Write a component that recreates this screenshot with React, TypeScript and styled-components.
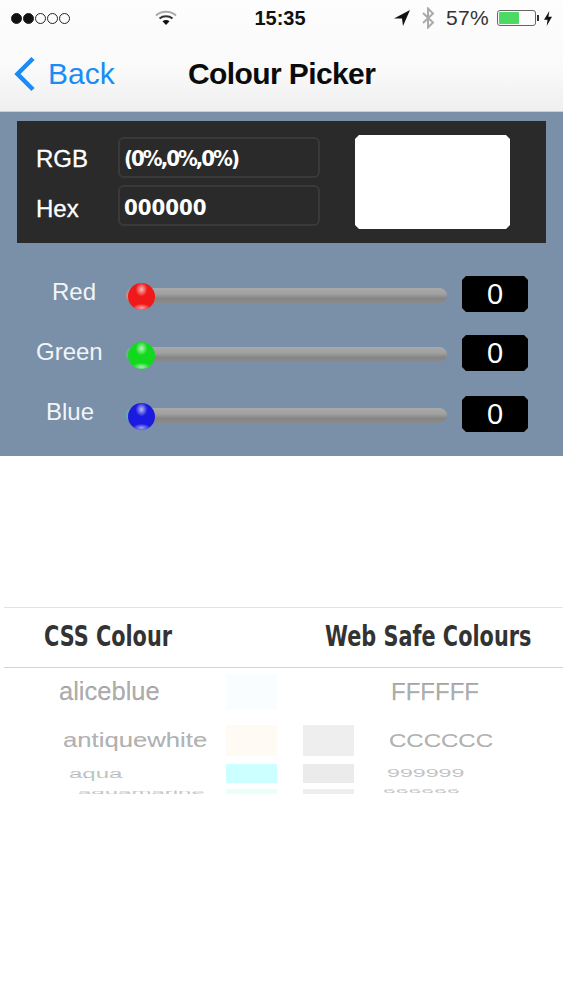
import React from 'react';
import styled, { createGlobalStyle } from 'styled-components';

const GlobalStyle = createGlobalStyle`
  html, body {
    margin: 0;
    padding: 0;
    background: #fff;
    font-family: "Liberation Sans", Arial, sans-serif;
  }
`;

const Page = styled.div`
  width: 563px;
  height: 1000px;
  overflow: hidden;
  background: #fff;
`;

const Header = styled.header`
  height: 112px;
  box-sizing: border-box;
  background: linear-gradient(180deg, #fdfdfd 0%, #fafafa 60%, #efefef 100%);
  border-bottom: 1px solid #c9ced4;
`;

const StatusBar = styled.div`
  height: 36px;
  display: flex;
  align-items: center;
  padding: 0 11px 0 11px;
`;

const Dots = styled.div`
  display: flex;
  gap: 1px;
  width: 144px;
`;

const Dot = styled.span<{ $filled: boolean }>`
  width: 11px;
  height: 11px;
  box-sizing: border-box;
  border-radius: 50%;
  border: 1px solid #222;
  background: ${p => (p.$filled ? '#111' : 'transparent')};
`;

const Time = styled.div`
  width: 130px;
  margin-left: 38px;
  text-align: center;
  font-size: 20px;
  font-weight: 700;
  color: #111;
`;

const StatusRight = styled.div`
  margin-left: auto;
  display: flex;
  align-items: center;
  gap: 11px;
  color: #333;
  font-size: 21px;
`;

const BatteryLevel = styled.span`
  margin-right: -3px;
  letter-spacing: 0.3px;
`;

const Battery = styled.div`
  width: 39px;
  height: 16px;
  box-sizing: border-box;
  border: 1px solid #666;
  border-radius: 3px;
  padding: 1px;
  margin-right: -3px;
  position: relative;

  &::after {
    content: '';
    position: absolute;
    right: -4px;
    top: 4px;
    width: 2px;
    height: 6px;
    background: #333;
  }
`;

const BatteryFill = styled.div<{ $level: number }>`
  width: ${p => p.$level}%;
  height: 100%;
  border-radius: 1px;
  background: #4cd964;
`;

const NavBar = styled.nav`
  height: 76px;
  display: flex;
  align-items: center;
  padding: 0 0 0 14px;
  box-sizing: border-box;
`;

const BackLink = styled.a`
  display: flex;
  align-items: center;
  gap: 12px;
  width: 174px;
  color: #1a8cf5;
  font-size: 30px;
`;

const Title = styled.h1`
  margin: 0;
  font-size: 30px;
  font-weight: 700;
  color: #0b0b0b;
  letter-spacing: -0.6px;
`;

const ControlPanel = styled.section`
  height: 344px;
  box-sizing: border-box;
  padding: 9px 17px 0;
  background: #7a8fa8;
`;

const ValueCard = styled.div`
  width: 529px;
  height: 122px;
  box-sizing: border-box;
  padding: 15px 36px 0 19px;
  background: #2a2a2a;
  display: grid;
  grid-template-columns: 82px 202px 1fr;
  grid-template-rows: 42px 42px;
  row-gap: 6px;
  align-items: center;
`;

const ValueLabel = styled.div<{ $drop: number }>`
  font-size: 24px;
  color: #fff;
  -webkit-text-stroke: 0.3px #fff;
  padding-top: ${p => p.$drop}px;
`;

const ValueField = styled.div<{ $spacing: number; $drop: number }>`
  height: 41px;
  box-sizing: border-box;
  border: 2px solid #3a3a3a;
  border-radius: 6px;
  display: flex;
  align-items: center;
  padding: ${p => p.$drop}px 0 0 4px;
  color: #fff;
  font-family: "DejaVu Sans Condensed", "DejaVu Sans", sans-serif;
  font-weight: 700;
  font-size: 22px;
  letter-spacing: ${p => p.$spacing}px;
`;

const Preview = styled.div`
  grid-column: 3;
  grid-row: 1 / span 2;
  justify-self: end;
  align-self: start;
  margin-top: -1px;
  width: 155px;
  height: 94px;
  background: #fff;
  clip-path: polygon(4px 0, calc(100% - 4px) 0, 100% 4px, 100% calc(100% - 4px), calc(100% - 4px) 100%, 4px 100%, 0 calc(100% - 4px), 0 4px);
`;

const Sliders = styled.div`
  display: grid;
  grid-template-columns: 92px 321px 66px;
  grid-auto-rows: 36px;
  row-gap: 24px;
  margin-top: 33px;
  padding-left: 17px;
  align-items: center;
`;

const SliderLabel = styled.div<{ $left: number }>`
  font-size: 24px;
  color: #f2f5f8;
  white-space: nowrap;
  padding-left: ${p => p.$left}px;
  margin: -5px 0 0 2px;
`;

const Track = styled.div<{ $drop: number; $tint: string }>`
  height: 15px;
  margin-top: ${p => p.$drop}px;
  border-radius: 8px;
  position: relative;
  background: linear-gradient(180deg, #a9a9a9 0%, #a0a0a0 40%, #858585 70%, #8b8b8b 100%);

  &::before {
    content: '';
    position: absolute;
    left: 0;
    top: 2px;
    width: 10px;
    height: 11px;
    border-radius: 5px;
    background: ${p => p.$tint};
  }
`;

const Knob = styled.div<{ $colour: string }>`
  position: absolute;
  left: 2px;
  top: -5px;
  width: 27px;
  height: 27px;
  border-radius: 50%;
  background:
    radial-gradient(ellipse 6px 7px at 50% 24%, rgba(255, 255, 255, 0.7), transparent),
    radial-gradient(ellipse 9px 4px at 50% 92%, rgba(255, 255, 255, 0.6), transparent),
    ${p => p.$colour};
`;

const ValueBox = styled.div<{ $nudge: number }>`
  height: 36px;
  margin: ${p => p.$nudge}px 0 0 15px;
  width: 66px;
  background: #000;
  color: #fff;
  font-size: 29px;
  display: flex;
  align-items: center;
  justify-content: center;
  clip-path: polygon(4px 0, calc(100% - 4px) 0, 100% 4px, 100% calc(100% - 4px), calc(100% - 4px) 100%, 4px 100%, 0 calc(100% - 4px), 0 4px);
`;

const PickerSection = styled.section`
  margin: 151px 0 0 4px;
`;

const ColumnHeads = styled.div`
  height: 61px;
  box-sizing: border-box;
  border-top: 1px solid #e2e2e2;
  border-bottom: 1px solid #d4d4d4;
  display: grid;
  grid-template-columns: 281px auto;
  align-items: center;
  padding-left: 40px;
`;

const HeadLabel = styled.span`
  justify-self: start;
  margin-top: -4px;
  white-space: nowrap;
  color: #333;
  font-family: "DejaVu Sans Condensed", "DejaVu Sans", sans-serif;
  font-weight: 700;
  font-size: 26px;
  transform-origin: left center;
  transform: scale(0.89, 1.12);
`;

const Wheel = styled.div`
  height: 126px;
  overflow: hidden;
  display: grid;
  grid-template-columns: 222px 77px 1fr;
  grid-auto-rows: min-content;
`;

const WheelRow = styled.div<{ $height: number; $top: number }>`
  grid-column: 1 / -1;
  display: grid;
  grid-template-columns: subgrid;
  grid-template-rows: minmax(0, 1fr);
  align-items: center;
  height: ${p => p.$height}px;
  margin-top: ${p => p.$top}px;
`;

const WheelText = styled.div<{ $left: number; $squash: number; $fade: number; $size: number }>`
  padding-left: ${p => p.$left}px;
  color: rgba(70, 70, 70, ${p => p.$fade});
  -webkit-text-stroke: 0.25px rgba(70, 70, 70, ${p => p.$fade});
  font-size: ${p => p.$size}px;
  line-height: 1;
  white-space: nowrap;
  transform: scaleY(${p => p.$squash});
`;

const Swatch = styled.div<{ $colour: string }>`
  width: 51px;
  height: 100%;
  flex: none;
  background: ${p => p.$colour};
`;

const WebCell = styled.div`
  display: flex;
  height: 100%;
  align-items: center;
`;

const rows = [
  { name: 'aliceblue', css: '#fafdff', web: 'transparent', hex: 'FFFFFF', height: 36, top: 6, nameLeft: 55, hexLeft: 37, squash: 1, fade: 0.45, nameSize: 25.5, hexSize: 24 },
  { name: 'antiquewhite', css: '#fffaf4', web: '#eeeeee', hex: 'CCCCCC', height: 31, top: 15, nameLeft: 59, hexLeft: 35, squash: 0.78, fade: 0.42, nameSize: 25.7, hexSize: 24 },
  { name: 'aqua', css: '#ccffff', web: '#ebebeb', hex: '999999', height: 19, top: 8, nameLeft: 65, hexLeft: 33, squash: 0.5, fade: 0.32, nameSize: 24, hexSize: 23.2 },
  { name: 'aquamarine', css: '#eafff8', web: '#eeeeee', hex: '666666', height: 5, top: 6, nameLeft: 74, hexLeft: 29, squash: 0.2, fade: 0.3, nameSize: 24, hexSize: 23 },
];

const channels = [
  { label: 'Red', colour: '#f01818', tint: '#c98a8a', left: 16, drop: 3, nudge: 0 },
  { label: 'Green', colour: '#12d81e', tint: '#72b08c', left: 0, drop: 1, nudge: -2 },
  { label: 'Blue', colour: '#1a1ae0', tint: '#5cb0b0', left: 10, drop: 3, nudge: 0 },
];

const App: React.FC = () => {
  return (
    <Page>
      <GlobalStyle />
      <Header>
        <StatusBar>
          <Dots>
            {[true, true, false, false, false].map((filled, i) => (
              <Dot key={i} $filled={filled} />
            ))}
          </Dots>
          <svg width="22" height="16" viewBox="0 0 22 16">
            <path d="M1 5.5C6.5 .5 15.5 .5 21 5.5" fill="none" stroke="#aaa" strokeWidth="2" />
            <path d="M4.5 8.5C8 5.5 14 5.5 17.5 8.5" fill="none" stroke="#333" strokeWidth="2" />
            <path d="M11 15L7.5 11.2C9.5 9.6 12.5 9.6 14.5 11.2Z" fill="#111" />
          </svg>
          <Time>15:35</Time>
          <StatusRight>
            <svg width="16" height="16" viewBox="0 0 16 16">
              <path d="M0 8.5L16 0L9 16L8 8.5Z" fill="#111" />
            </svg>
            <svg width="14" height="22" viewBox="0 0 14 22">
              <path d="M2 6L12 15.5L7 20.5V1.5L12 6.5L2 16" fill="none" stroke="#aaa" strokeWidth="2" />
            </svg>
            <BatteryLevel>57%</BatteryLevel>
            <Battery>
              <BatteryFill $level={57} />
            </Battery>
            <svg width="8" height="17" viewBox="0 0 9 17">
              <path d="M6 0L0 10H4L3 17L9 6.5H5Z" fill="#111" />
            </svg>
          </StatusRight>
        </StatusBar>
        <NavBar>
          <BackLink>
            <svg width="22" height="36" viewBox="0 0 22 36">
              <path d="M19 2.5L3.5 18L19 33.5" fill="none" stroke="#1a8cf5" strokeWidth="4.5" />
            </svg>
            Back
          </BackLink>
          <Title>Colour Picker</Title>
        </NavBar>
      </Header>

      <ControlPanel>
        <ValueCard>
          <ValueLabel $drop={4}>RGB</ValueLabel>
          <ValueField $spacing={-2} $drop={2}>(0%,0%,0%)</ValueField>
          <Preview />
          <ValueLabel $drop={8}>Hex</ValueLabel>
          <ValueField $spacing={0} $drop={4}>000000</ValueField>
        </ValueCard>
        <Sliders>
          {channels.map(c => (
            <React.Fragment key={c.label}>
              <SliderLabel $left={c.left}>{c.label}</SliderLabel>
              <Track $drop={c.drop} $tint={c.tint}>
                <Knob $colour={c.colour} />
              </Track>
              <ValueBox $nudge={c.nudge}>0</ValueBox>
            </React.Fragment>
          ))}
        </Sliders>
      </ControlPanel>

      <PickerSection>
        <ColumnHeads>
          <HeadLabel>CSS Colour</HeadLabel>
          <HeadLabel>Web Safe Colours</HeadLabel>
        </ColumnHeads>
        <Wheel>
          {rows.map(r => (
            <WheelRow key={r.name} $height={r.height} $top={r.top}>
              <WheelText $left={r.nameLeft} $squash={r.squash} $fade={r.fade} $size={r.nameSize}>
                {r.name}
              </WheelText>
              <Swatch $colour={r.css} />
              <WebCell>
                <Swatch $colour={r.web} />
                <WheelText $left={r.hexLeft} $squash={r.squash} $fade={r.fade} $size={r.hexSize}>
                  {r.hex}
                </WheelText>
              </WebCell>
            </WheelRow>
          ))}
        </Wheel>
      </PickerSection>
    </Page>
  );
};

export default App;
